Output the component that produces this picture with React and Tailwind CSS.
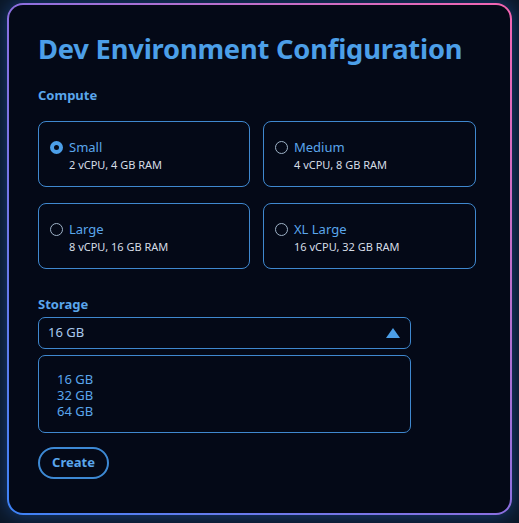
import React from "react";

const options = [
  { name: "Small", desc: "2 vCPU, 4 GB RAM", selected: true },
  { name: "Medium", desc: "4 vCPU, 8 GB RAM" },
  { name: "Large", desc: "8 vCPU, 16 GB RAM" },
  { name: "XL Large", desc: "16 vCPU, 32 GB RAM" },
];

function Radio({ selected }) {
  return selected ? (
    <span className="w-[13px] h-[13px] rounded-full border-[4px] border-[#4c9fe8] bg-[#050a18] shrink-0" />
  ) : (
    <span className="w-[13px] h-[13px] rounded-full border-[1.5px] border-[#9fb3c8] shrink-0" />
  );
}

export default function App() {
  return (
    <div
      className="w-[519px] h-[523px] bg-[#0b1727] pt-[3px] pl-[7px] overflow-hidden"
      style={{ fontFamily: '"Noto Sans", sans-serif' }}
    >
      <div className="w-[505px] h-[512px] rounded-[16px] p-[2px] bg-linear-to-tr from-[#3b82f6] via-[#8b6fe0] to-[#f464b0] shadow-[0_0_18px_rgba(40,110,220,0.45)]">
        <div className="w-full h-full rounded-[14px] bg-[#040917] pl-[29px] pr-[30px] pt-[25px]">
          <h1 className="text-[27.3px] leading-[38px] font-bold text-[#4c9fe8] tracking-[-0.2px]">
            Dev Environment Configuration
          </h1>
          <div className="mt-[18px] text-[13px] leading-[18px] font-bold text-[#5aa6ec]">Compute</div>
          <div className="mt-[17px] grid grid-cols-[212px_213px] gap-x-[13px] gap-y-[16px]">
            {options.map((o) => (
              <div
                key={o.name}
                className="h-[66px] rounded-[8px] border border-[#3f88cf] pl-[11px] pt-[16px]"
              >
                <div className="flex items-center gap-[6px]">
                  <Radio selected={o.selected} />
                  <span className="text-[13px] leading-[18px] text-[#5aa6ec]">{o.name}</span>
                </div>
                <div className="mt-[1px] pl-[19px] text-[11px] leading-[16px] text-[#d6dde6]">
                  {o.desc}
                </div>
              </div>
            ))}
          </div>
          <div className="mt-[26px] text-[13px] leading-[18px] font-bold text-[#5aa6ec]">Storage</div>
          <div className="mt-[4px] w-[373px] h-[32px] rounded-[7px] border border-[#3f88cf] flex items-center justify-between pl-[9px] pr-[10px]">
            <span className="text-[13px] text-[#a9c9ee]">16 GB</span>
            <svg width="14" height="10" viewBox="0 0 14 10">
              <path d="M7 0 L14 10 L0 10 Z" fill="#4c9fe8" />
            </svg>
          </div>
          <div className="mt-[6px] w-[373px] h-[78px] rounded-[7px] border border-[#3f88cf] pl-[18px] pt-[15px] text-[13px] leading-[16px] text-[#5aa6ec]">
            <div>16 GB</div>
            <div>32 GB</div>
            <div>64 GB</div>
          </div>
          <button className="mt-[14px] w-[71px] h-[32px] rounded-full border-2 border-[#3d89d4] text-[13px] font-bold text-[#5aa6ec]">
            Create
          </button>
        </div>
      </div>
    </div>
  );
}
